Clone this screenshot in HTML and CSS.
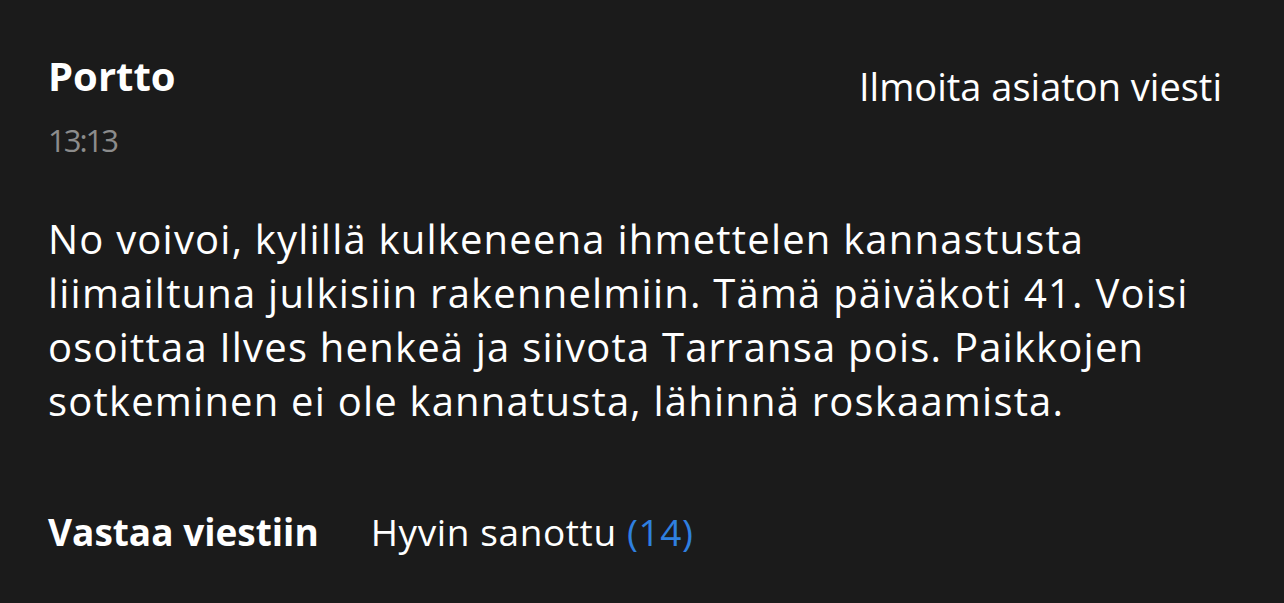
FILE: index.html
```html
<!DOCTYPE html>
<html lang="fi">
<head>
    <meta charset="UTF-8">
    <meta name="viewport" content="width=device-width, initial-scale=1.0">
    <title>Portto</title>
    <link rel="stylesheet" href="styles.css">
</head>
<body>
    <div class="comment">
        <div class="comment-head">
            <div class="author">
                <div class="author-name">Portto</div>
                <div class="comment-time">13:13</div>
            </div>
            <a href="#" class="report-link">Ilmoita asiaton viesti</a>
        </div>

        <p class="comment-text">No voivoi, kylillä kulkeneena ihmettelen kannastusta liimailtuna julkisiin rakennelmiin. Tämä päiväkoti 41. Voisi osoittaa Ilves henkeä ja siivota Tarransa pois. Paikkojen sotkeminen ei ole kannatusta, lähinnä roskaamista.</p>

        <div class="comment-actions">
            <a href="#" class="reply-link">Vastaa viestiin</a>
            <a href="#" class="like-link">Hyvin sanottu <span class="like-count">(14)</span></a>
        </div>
    </div>
</body>
</html>
```

FILE: styles.css
```css
body {
    margin: 0;
    padding: 0;
    background-color: #1b1b1b;
    color: #fff;
    font-family: 'Open Sans', 'Noto Sans', sans-serif;
    font-variant-ligatures: none;
}
a {
    color: inherit;
    text-decoration: none;
}
.comment {
    padding: 50px 62px 0 48px;
}
.comment-head {
    display: flex;
    justify-content: space-between;
    align-items: flex-start;
}
.author-name {
    font-size: 40px;
    font-weight: bold;
    line-height: 52px;
}
.comment-time {
    margin-top: 16px;
    font-size: 31px;
    line-height: 44px;
    letter-spacing: -2px;
    color: #8c8c8c;
}
.report-link {
    margin-top: 12px;
    font-size: 38px;
    line-height: 48px;
}
.comment-text {
    margin: 50px 0 0;
    font-size: 40px;
    line-height: 54px;
    letter-spacing: 1.2px;
}
.comment-actions {
    display: flex;
    gap: 52px;
    margin-top: 80px;
    font-size: 37px;
    line-height: 48px;
}
.reply-link {
    font-weight: bold;
}
.like-link {
    letter-spacing: 0.6px;
}
.like-count {
    color: #2f80e0;
}
```
